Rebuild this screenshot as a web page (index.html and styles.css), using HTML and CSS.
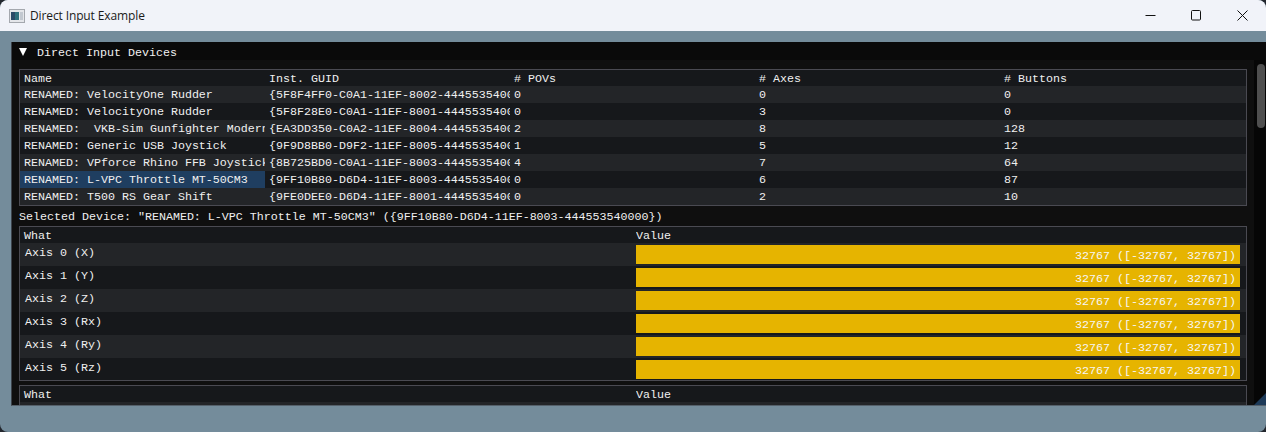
FILE: index.html
```html
<!DOCTYPE html>
<html lang="en">
<head>
<meta charset="utf-8">
<title>Direct Input Example</title>
<link rel="stylesheet" href="styles.css">
</head>
<body>
<div class="window">
  <header class="titlebar">
    <svg class="app-icon" width="16" height="14" viewBox="0 0 16 14"><rect x="0.5" y="0.5" width="15" height="13" fill="#e4e6ea" stroke="#a4a8ae"/><rect x="2" y="3" width="8" height="8" fill="#2f6f7c"/><rect x="2" y="3" width="4" height="8" fill="#2a4a68"/><rect x="11" y="3" width="3" height="8" fill="#c2c8d0"/></svg>
    <span class="title">Direct Input Example</span>
    <div class="controls">
      <svg class="ctl" width="46" height="31" viewBox="0 0 46 31"><path d="M17.5 15.5h10" stroke="#111" fill="none"/></svg>
      <svg class="ctl" width="46" height="31" viewBox="0 0 46 31"><rect x="17.5" y="10.5" width="9" height="9.5" rx="1" stroke="#111" fill="none"/></svg>
      <svg class="ctl" width="46" height="31" viewBox="0 0 46 31"><path d="M17.5 10.5l10 10M27.5 10.5l-10 10" stroke="#111" fill="none"/></svg>
    </div>
  </header>
  <main class="client">
    <section class="panel">
      <div class="panel-head"><span class="arrow"></span><span>Direct Input Devices</span></div>
      <div class="panel-main">
        <div class="panel-body">
          <div class="table devices">
            <div class="row head"><span>Name</span><span>Inst. GUID</span><span># POVs</span><span># Axes</span><span># Buttons</span></div>
            <div class="row"><span>RENAMED: VelocityOne Rudder</span><span>{5F8F4FF0-C0A1-11EF-8002-444553540000}</span><span>0</span><span>0</span><span>0</span></div>
            <div class="row"><span>RENAMED: VelocityOne Rudder</span><span>{5F8F28E0-C0A1-11EF-8001-444553540000}</span><span>0</span><span>3</span><span>0</span></div>
            <div class="row"><span>RENAMED:&nbsp; VKB-Sim Gunfighter Modern Combat</span><span>{EA3DD350-C0A2-11EF-8004-444553540000}</span><span>2</span><span>8</span><span>128</span></div>
            <div class="row"><span>RENAMED: Generic USB Joystick</span><span>{9F9D8BB0-D9F2-11EF-8005-444553540000}</span><span>1</span><span>5</span><span>12</span></div>
            <div class="row"><span>RENAMED: VPforce Rhino FFB Joystick</span><span>{8B725BD0-C0A1-11EF-8003-444553540000}</span><span>4</span><span>7</span><span>64</span></div>
            <div class="row"><span class="selected">RENAMED: L-VPC Throttle MT-50CM3</span><span>{9FF10B80-D6D4-11EF-8003-444553540000}</span><span>0</span><span>6</span><span>87</span></div>
            <div class="row"><span>RENAMED: T500 RS Gear Shift</span><span>{9FE0DEE0-D6D4-11EF-8001-444553540000}</span><span>0</span><span>2</span><span>10</span></div>
          </div>
          <p class="selected-line">Selected Device: "RENAMED: L-VPC Throttle MT-50CM3" ({9FF10B80-D6D4-11EF-8003-444553540000})</p>
          <div class="table axes">
            <div class="row head"><span>What</span><span>Value</span></div>
            <div class="row"><span>Axis 0 (X)</span><div class="bar">32767 ([-32767, 32767])</div></div>
            <div class="row"><span>Axis 1 (Y)</span><div class="bar">32767 ([-32767, 32767])</div></div>
            <div class="row"><span>Axis 2 (Z)</span><div class="bar">32767 ([-32767, 32767])</div></div>
            <div class="row"><span>Axis 3 (Rx)</span><div class="bar">32767 ([-32767, 32767])</div></div>
            <div class="row"><span>Axis 4 (Ry)</span><div class="bar">32767 ([-32767, 32767])</div></div>
            <div class="row"><span>Axis 5 (Rz)</span><div class="bar">32767 ([-32767, 32767])</div></div>
          </div>
          <div class="table axes clipped">
            <div class="row head"><span>What</span><span>Value</span></div>
            <div class="row"></div>
          </div>
        </div>
        <div class="scrollbar"><div class="thumb"></div></div>
      </div>
      <div class="grip"></div>
    </section>
  </main>
</div>
</body>
</html>
```
FILE: styles.css
```css
* { box-sizing: border-box; }
html, body { height: 100%; }
body {
  margin: 0;
  background: #23272e;
  overflow: hidden;
}
.window {
  width: 1266px;
  height: 432px;
  display: flex;
  flex-direction: column;
  border-radius: 8px;
  overflow: hidden;
  background: #748c9b;
}
.titlebar {
  height: 31px;
  flex: none;
  display: flex;
  align-items: center;
  background: #f1f3f9;
  padding-left: 9px;
  font: 12px "Open Sans", "Noto Sans", sans-serif;
  color: #1a1a1a;
}
.title { margin-left: 5px; letter-spacing: -0.12px; }
.controls { margin-left: auto; display: flex; }
.ctl { display: block; }
.client {
  flex: 1;
  min-height: 0;
  padding: 11px 0 0 11px;
  display: flex;
  align-items: flex-start;
  font: 11.67px/13px "Liberation Mono", "DejaVu Sans Mono", monospace;
  color: #f0f0f0;
}
.panel {
  position: relative;
  width: 1255px;
  height: 364px;
  display: flex;
  flex-direction: column;
  background: #0f0f0f;
  border-left: 1px solid #3c434b;
  border-bottom: 1px solid #55606a;
  overflow: hidden;
}
.panel-head {
  height: 18px;
  flex: none;
  display: flex;
  align-items: center;
  gap: 10px;
  padding: 4px 0 0 7px;
  background: #0a0a0a;
}
.arrow {
  width: 0;
  height: 0;
  margin-top: -3px;
  border-left: 4.5px solid transparent;
  border-right: 4.5px solid transparent;
  border-top: 8px solid #fff;
}
.panel-main { flex: 1; min-height: 0; display: flex; }
.panel-body {
  flex: none;
  width: 1242px;
  padding: 9px 7px 0 7px;
  overflow: hidden;
}
.scrollbar {
  flex: 1;
  background: #060606;
  padding: 4px 1px 0 3px;
}
.thumb {
  height: 64px;
  border-radius: 5px;
  background: #4f4f4f;
}
.table {
  border: 1px solid #4a4a52;
  background: #16181b;
  width: 1228px;
  overflow: hidden;
}
.row { display: grid; white-space: nowrap; }
.row > span { padding-left: 4px; overflow: hidden; }
.devices .row {
  grid-template-columns: repeat(5, 245px);
  height: 17px;
  line-height: 17px;
}
.devices .row > span { padding-top: 1px; }
.devices .row:nth-child(even) { background: #232528; }
.devices .selected { background: #1f3e60; }
.selected-line {
  margin: 0;
  height: 20px;
  line-height: 22px;
  white-space: nowrap;
}
.axes .row {
  grid-template-columns: 616px 604px;
  height: 23px;
  line-height: 20px;
}
.axes .row:last-child { height: 22px; }
.devices .row.head { height: 16px; line-height: 16px; }
.axes .row.head { height: 16px; line-height: 18px; }
.axes .row:nth-child(even) { background: #232528; }
.axes .row > span:first-child { padding-left: 5px; }
.axes .head > span:first-child { padding-left: 4px; }
.axes .head > span:last-child { padding-left: 0; }
.bar {
  height: 19px;
  margin-top: 2px;
  background: #e6b400;
  text-align: right;
  padding-right: 4px;
  line-height: 22px;
  color: #f6f6f6;
}
.clipped { margin-top: 4px; }
.grip {
  position: absolute;
  right: 0;
  bottom: 0;
  width: 12px;
  height: 12px;
  background: #1d3a58;
  clip-path: polygon(100% 0, 100% 100%, 0 100%);
}
```
